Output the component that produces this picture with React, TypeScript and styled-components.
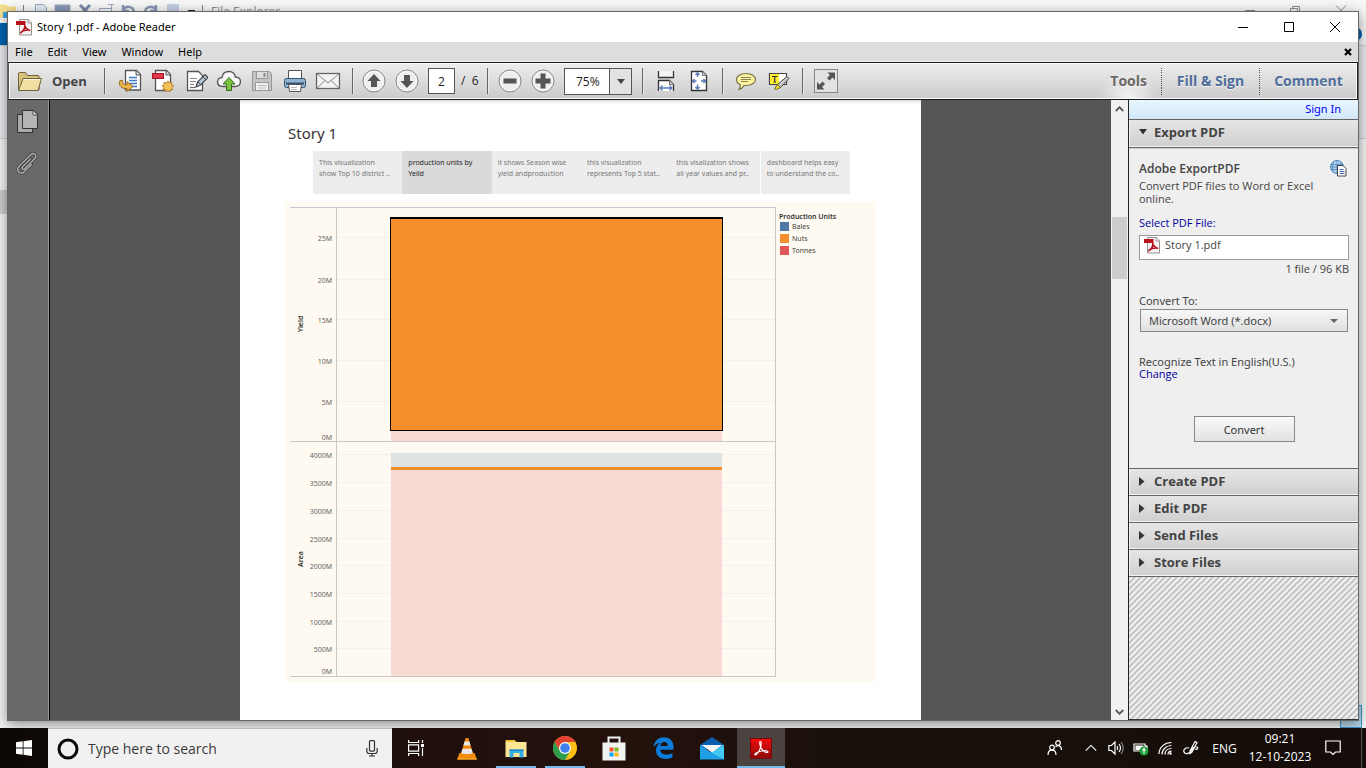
import React from 'react';
import styled, { createGlobalStyle } from 'styled-components';

const ui = '"Open Sans", "Noto Sans", sans-serif';
const wide = '"Noto Sans", "Open Sans", sans-serif';

const GlobalStyle = createGlobalStyle`
  *, *::before, *::after { box-sizing: border-box; }
  html, body, #root { height: 100%; }
  body { margin: 0; overflow: hidden; font-family: ${ui}; font-size: 12px; color: #111; }
  button, input, select { font: inherit; color: inherit; margin: 0; }
  button { border: 0; padding: 0; background: none; cursor: pointer; }
  h1, h2, p { margin: 0; }
  a { text-decoration: none; }
  svg { display: block; flex: none; }
`;

/* ---------- desktop ---------- */

const Desktop = styled.div`
  position: relative;
  height: 100vh;
  display: flex;
  flex-direction: column;
  overflow: hidden;
`;

const Workspace = styled.div`
  flex: 1;
  min-height: 0;
  display: flex;
  padding: 11px 7px 7px;
`;

/* ---------- file explorer behind the reader ---------- */

const Explorer = styled.div`
  position: absolute;
  inset: 0 0 40px;
  display: flex;
  flex-direction: column;
  background: #f4f4f4;
  color: #8a8a8a;
`;

const ExplorerTitle = styled.div`
  height: 23px;
  flex: none;
  display: flex;
  align-items: center;
  background: #f7f7f7;
`;

const ExplorerCaption = styled.span`
  font-size: 12px;
  line-height: 16px;
  margin-left: 8px;
`;

const ExplorerControls = styled.div`
  margin-left: auto;
  margin-right: 19px;
`;

const ExplorerRibbon = styled.div`
  height: 23px;
  flex: none;
  display: flex;
  justify-content: space-between;
  border-bottom: 1px solid #d0d0d0;
`;

const ExplorerFile = styled.div`
  width: 56px;
  background: #0063b1;
`;

const ExplorerHelp = styled.div`
  width: 16px;
  height: 14px;
  margin: 4px 4px 0 0;
  border-radius: 8px;
  background: #0063b1;
`;

const ExplorerBar = styled.div`
  height: 93px;
  flex: none;
  background: #e8eaed;
  border-bottom: 1px solid #cfcfcf;
`;

const ExplorerBody = styled.div`
  flex: 1;
  padding-top: 51px;
`;

const ExplorerRow = styled.div`
  height: 24px;
  width: 160px;
  background: #cfcfcf;
`;

const ExplorerStatus = styled.div`
  height: 23px;
  flex: none;
  display: flex;
  justify-content: space-between;
  padding: 0 4px 0 14px;
  font-size: 12px;
  line-height: 20px;
  color: #26486e;
`;

const ExplorerView = styled.div`
  width: 22px;
  border: 1px solid #3b97cf;
  background: #b8dbee;
`;

/* ---------- reader window ---------- */

const Window = styled.main`
  position: relative;
  flex: 1;
  min-width: 0;
  display: flex;
  flex-direction: column;
  border: 1px solid #666;
  background: #fff;
  box-shadow: 0 3px 12px rgba(0, 0, 0, 0.45);
`;

const TitleBar = styled.header`
  height: 30px;
  flex: none;
  display: flex;
  align-items: center;
  padding-left: 8px;
  gap: 5px;
  background: #fff;
`;

const Title = styled.h1`
  font-family: ${wide};
  font-size: 11px;
  line-height: 16px;
  font-weight: 400;
  color: #000;
`;

const WindowControls = styled.div`
  margin-left: auto;
  display: flex;
`;

const ControlButton = styled.button`
  width: 46px;
  height: 29px;
  display: grid;
  place-items: center;
`;

const MenuBar = styled.nav`
  height: 20px;
  flex: none;
  display: flex;
  align-items: center;
  padding: 0 5px 0 7px;
  gap: 15px;
  background: #ddd;
  border-bottom: 1px solid #eee;
`;

const MenuItem = styled.button`
  font-family: ${wide};
  font-size: 11px;
  line-height: 16px;
  color: #000;
`;

const CloseDoc = styled.button`
  margin-left: auto;
`;

const Toolbar = styled.div`
  height: 38px;
  flex: none;
  display: flex;
  align-items: center;
  border: 1px solid #1c1c1c;
  border-left-color: #555;
  box-shadow: inset 0 0 0 1px #fafafa;
  background: linear-gradient(#ededed, #cbcbcb);
`;

const OpenButton = styled.button`
  width: 87px;
  display: flex;
  align-items: center;
  gap: 9px;
  padding-left: 8px;
  font-size: 13px;
  line-height: 18px;
  font-weight: 700;
  color: #444;
`;

const ToolButton = styled.button`
  width: 33px;
  height: 30px;
  display: grid;
  place-items: center;
`;

const Separator = styled.span<{ $before: number; $after: number }>`
  width: 1px;
  height: 26px;
  flex: none;
  margin: 0 ${p => p.$after}px 0 ${p => p.$before}px;
  background: #666;
  box-shadow: 1px 0 #e8e8e8;
`;

const PageInput = styled.input`
  width: 27px;
  height: 26px;
  margin-left: 5px;
  padding: 0;
  text-align: center;
  border: 1px solid #555;
  background: #fff;
  font-size: 12px;
  color: #222;
`;

const PageTotal = styled.span`
  width: 24px;
  padding-left: 6px;
  white-space: nowrap;
  font-size: 12px;
  line-height: 16px;
  color: #222;
`;

const ZoomBox = styled.div`
  width: 68px;
  height: 27px;
  margin-left: 5px;
  display: grid;
  grid-template-columns: 1fr 22px;
  border: 1px solid #555;
  background: #fff;
`;

const ZoomSelect = styled.select`
  grid-area: 1 / 1 / 2 / 3;
  appearance: none;
  border: 0;
  padding: 0 0 0 11px;
  background: transparent;
  font-size: 12px;
  color: #222;
`;

const ZoomArrow = styled.span`
  grid-area: 1 / 2 / 2 / 3;
  display: grid;
  place-items: center;
  border-left: 1px solid #555;
  background: #e2e2e2;
  pointer-events: none;
`;

const PaneTabs = styled.div`
  margin-left: auto;
  display: flex;
  align-items: center;
`;

const PaneTab = styled.button<{ $active?: boolean }>`
  height: 34px;
  padding: 0 14px;
  font-size: 14px;
  line-height: 20px;
  font-weight: 700;
  color: ${p => (p.$active ? '#6a6764' : '#4f6d9a')};
  background: ${p => (p.$active ? 'radial-gradient(ellipse at 50% 100%, #f2f2f2, transparent 65%)' : 'none')};
  text-shadow: 0 1px #f4f4f4;

  & + & {
    height: 28px;
    min-width: 98px;
    border-image: repeating-linear-gradient(#555 0 1px, transparent 1px 2px) 1;
    border-style: solid;
    border-width: 0 0 0 1px;
  }
`;

const Body = styled.div`
  flex: 1;
  min-height: 0;
  display: flex;
`;

const Rail = styled.aside`
  width: 42px;
  flex: none;
  display: flex;
  flex-direction: column;
  align-items: center;
  gap: 16px;
  padding: 8px 3px 0 0;
  background: #696969;
  border-right: 1px solid #000;
  box-shadow: inset -1px 0 #999;
`;

const RailButton = styled.button`
  height: 26px;
`;

const DocumentPane = styled.section`
  flex: 1;
  min-width: 0;
  display: flex;
  justify-content: center;
  overflow: hidden;
  background: #565656;
`;

const Page = styled.article`
  width: 681px;
  flex: none;
  padding: 23px 45px 0;
  background: linear-gradient(#ddd, #fff 4px);
  font-family: ${wide};
`;

const StoryTitle = styled.h2`
  padding-left: 3px;
  font-size: 15px;
  line-height: 20px;
  font-weight: 400;
  color: #333;
`;

const Points = styled.nav`
  display: flex;
  margin: 8px 26px 8px 28px;
`;

const Point = styled.button<{ $active?: boolean }>`
  flex: 1;
  min-width: 0;
  height: 43px;
  padding: 6px 0 0 6px;
  display: flex;
  flex-direction: column;
  font-size: 7px;
  line-height: 11px;
  white-space: nowrap;
  text-align: left;
  color: ${p => (p.$active ? '#222' : '#777')};
  background: ${p => (p.$active ? '#dadada' : '#ededed')};

  &:last-child { border-left: 1px solid #fff; }
`;

const ScrollBar = styled.div`
  width: 17px;
  flex: none;
  display: flex;
  flex-direction: column;
  align-items: center;
  justify-content: space-between;
  padding: 6px 1px 5px 0;
  background: #f0f0f0;
`;

const ScrollTrack = styled.div`
  flex: 1;
  align-self: stretch;
  padding: 105px 0 0 1px;
`;

const ScrollThumb = styled.div`
  height: 62px;
  background: #cdcdcd;
`;

/* ---------- tools panel ---------- */

/* the tile's corners carry the ends of the neighbouring stripes */
const Panel = styled.aside`
  width: 230px;
  flex: none;
  display: flex;
  flex-direction: column;
  border-left: 1px solid #222;
  border-bottom: 1px solid #333;
  background: linear-gradient(135deg, #efefef 9%, #c8c8c8 9% 41%, #efefef 41% 59%, #c8c8c8 59% 91%, #efefef 91%) 0 0 / 6px 6px;
`;

const SignIn = styled.div`
  height: 20px;
  flex: none;
  padding-right: 17px;
  text-align: right;
  border-bottom: 1px solid #666;
  background: linear-gradient(#e8f5fd, #d2e8f8);
  font-family: ${wide};
  font-size: 11px;
  line-height: 18px;
`;

const BlueLink = styled.a`
  color: #00f;
`;

const NavyLink = styled.a`
  color: #00009c;
  font-size: 11px;
  line-height: 12px;
`;

const SectionHead = styled.button`
  height: 27px;
  flex: none;
  display: flex;
  align-items: center;
  gap: 7px;
  padding: 0 0 2px 9px;
  border-bottom: 1px solid #666;
  box-shadow: inset 1px 0 #f4f4f4, inset 0 -1px #f4f4f4;
  background: linear-gradient(#e6e6e6, #cfcfcf);
  font-size: 13px;
  line-height: 18px;
  font-weight: 700;
  color: #444;
`;

const ExportHead = styled(SectionHead)`
  height: 28px;
  padding-bottom: 4px;
`;

const ExportBody = styled.div`
  flex: none;
  display: flex;
  flex-direction: column;
  align-items: flex-start;
  padding: 10px 9px 26px 10px;
  border-bottom: 1px solid #666;
  background: #efefef;
  box-shadow: inset 0 1px #ccc;
  font-size: 11px;
  line-height: 13px;
  color: #444;
`;

const ExportTitle = styled.div`
  align-self: stretch;
  display: flex;
  justify-content: space-between;
  align-items: center;
  height: 20px;
  margin-bottom: 1px;
  padding-right: 2px;
  font-size: 12px;
  font-weight: 600;
`;

const SelectFile = styled(NavyLink)`
  margin-top: 12px;
`;

const FileBox = styled.div`
  align-self: stretch;
  display: flex;
  align-items: flex-start;
  gap: 5px;
  height: 25px;
  margin: 6px 0 2px;
  padding: 1px 4px;
  border: 1px solid #999;
  background: #fff;
`;

const FileName = styled.span`
  line-height: 16px;
`;

const FileInfo = styled.p`
  align-self: flex-end;
`;

const FormatLabel = styled.label`
  margin: 19px 0 2px;
  font-family: ${wide};
`;

const FormatBox = styled.div`
  align-self: stretch;
  height: 23px;
  margin: 0 1px;
  display: grid;
  grid-template-columns: 1fr 26px;
  border: 1px solid #888;
  background: linear-gradient(#f7f7f7, #e0e0e0);
  font-family: ${wide};
`;

const FormatSelect = styled.select`
  grid-area: 1 / 1 / 2 / 3;
  appearance: none;
  border: 0;
  padding: 0 0 0 8px;
  background: transparent;
`;

const FormatArrow = styled.span`
  grid-area: 1 / 2 / 2 / 3;
  display: grid;
  place-items: center;
  pointer-events: none;
`;

const Recognize = styled.p`
  margin-top: 24px;
  font-family: ${wide};
  line-height: 12px;
`;

const ConvertButton = styled.button`
  align-self: center;
  width: 101px;
  height: 26px;
  margin-top: 36px;
  border: 1px solid #888;
  background: linear-gradient(#fafafa, #e2e2e2);
  font-family: ${wide};
  font-size: 11px;
  color: #333;
`;

/* ---------- taskbar ---------- */

const TaskBar = styled.footer`
  position: relative;
  height: 40px;
  flex: none;
  display: flex;
  background: linear-gradient(90deg, #0d0807, #1b0f0b 20%, #24110c 45%, #17100a 65%, #150d09);
  color: #fff;
`;

const StartButton = styled.button`
  width: 48px;
  display: grid;
  place-items: center;
`;

const SearchBox = styled.label`
  width: 344px;
  display: flex;
  align-items: center;
  padding: 0 14px 0 9px;
  gap: 9px;
  border-top: 1px solid #bbb;
  background: #f1f1f1;
`;

const SearchInput = styled.input`
  flex: 1;
  min-width: 0;
  border: 0;
  padding: 0;
  outline: 0;
  background: transparent;
  font-size: 14px;
  line-height: 20px;

  &::placeholder { color: #3a3a3a; opacity: 1; }
`;

const Apps = styled.div`
  display: flex;
  gap: 1px;
  margin-left: 3px;
`;

const TaskButton = styled.button<{ $state?: 'open' | 'active' }>`
  width: 48px;
  display: grid;
  place-items: center;
  background: ${p => (p.$state === 'active' ? '#4a433f' : 'transparent')};
  background-image: ${p => (p.$state ? 'linear-gradient(#76b9ed, #76b9ed)' : 'none')};
  background-repeat: no-repeat;
  background-position: center bottom;
  background-size: ${p => (p.$state === 'active' ? '100%' : '40px')} 2px;
`;

const Tray = styled.div`
  margin-left: auto;
  display: flex;
  padding-right: 4px;
`;

const TrayButton = styled.button`
  width: 25px;
  display: grid;
  place-items: center;
`;

const PeopleButton = styled(TrayButton)`
  margin-right: 11px;
`;

const Language = styled(TrayButton)`
  width: 43px;
  font-size: 12px;
  color: #fff;
`;

const Clock = styled.time`
  width: 68px;
  text-align: center;
  font-size: 12px;
  line-height: 18px;
  padding-top: 2px;
  white-space: nowrap;
`;

const NoticeButton = styled(TrayButton)`
  width: 38px;
  margin-right: 9px;
`;

const DesktopEdge = styled.span`
  border-left: 1px solid #555;
`;

/* ---------- icons ---------- */

const PdfIcon = () => (
  <svg width="16" height="17" viewBox="0 0 16 17">
    <path d="M3.500 .5h9l3 3v12.500h-12z" fill="#f6f3f3" stroke="#9a8f8f" />
    <path d="M12 .5v3.500h3.500" fill="#fff" stroke="#9a8f8f" />
    <rect x="0" y="2" width="9.500" height="4" fill="#b5121b" />
    <path d="M8.700 6c.5 3-.8 6-4.500 8M4.500 13.500c3-2.300 6-2.800 9.800-2.300M8.500 6c.7 2.500 2.500 4.500 5.500 5.600" fill="none" stroke="#b5121b" strokeWidth="1.500" />
  </svg>
);

const FolderIcon = () => (
  <svg width="26" height="22" viewBox="0 0 26 22">
    <path d="M1.500 20V3.500q0-1 1-1h6l2 3h10.500q1 0 1 1V20z" fill="#d9c27c" stroke="#6d6140" />
    <path d="M6 8.500h18.500L21 20.500H1.500z" fill="#f0dfa2" stroke="#6d6140" />
    <path d="M7 9.500h16" stroke="#fff8d8" />
  </svg>
);

const ConvertIcon = () => (
  <svg width="24" height="24" viewBox="0 0 24 24">
    <path d="M7.500 1.500h11l4 4v15.500h-15z" fill="#fff" stroke="#555" strokeWidth="1.300" />
    <path d="M18 2v4h4" fill="#ddd" stroke="#555" />
    <path d="M11 8.500h8M11 11.500h8M11 14.500h8M14 17.500h5" stroke="#3a78c6" strokeWidth="1.500" />
    <path d="M2 11.500c-2 5 1.500 8.500 7 8v3l6-5-6-5v3.200c-3.500.4-5-1.200-4.500-4.200z" fill="#e9b64e" stroke="#9b6a1a" />
  </svg>
);

const CreateIcon = () => (
  <svg width="24" height="24" viewBox="0 0 24 24">
    <path d="M4.500 1.500h11l4 4v16h-15z" fill="#fff" stroke="#555" strokeWidth="1.300" />
    <path d="M15 2v4h4" fill="#ddd" stroke="#555" />
    <rect x="1.500" y="4.500" width="11" height="5" fill="#e4384a" stroke="#a01525" />
    <path d="M17 12l1.400 2 2.300-.6-.2 2.400 2.200 1-1.800 1.700.9 2.100-2.400.1-.7 2.200-1.900-1.400-1.900 1.400-.7-2.200-2.200-.1.800-2.100-1.800-1.700 2.200-1-.2-2.400 2.300.6z" fill="#f3c15a" stroke="#b8842e" />
  </svg>
);

const SignIcon = () => (
  <svg width="24" height="24" viewBox="0 0 24 24">
    <path d="M3.500 2.500h11l4 4v15h-15z" fill="#fff" stroke="#555" strokeWidth="1.300" />
    <path d="M6 9.500h7M6 12.500h6M6 15.500h4" stroke="#888" />
    <path d="M6 19c2-2 3 1 5-1" fill="none" stroke="#333" />
    <path d="M12 18l1.500-5L21 5.500l3 3-7.500 7.500z" fill="#b9c9dc" stroke="#444" strokeWidth="1.200" />
    <path d="M14 13l3 3M19 8l3 3" stroke="#444" />
  </svg>
);

const CloudIcon = () => (
  <svg width="26" height="24" viewBox="0 0 26 24">
    <path d="M7 17.500c-3.500 0-5.500-2-5.500-4.500s2-4.500 4.500-4.500c.5-4 3.500-6 7-6s6 2.500 6.300 5.500c3 0 5.200 2 5.200 4.800s-2.500 4.700-5.500 4.700z" fill="#f7f7f7" stroke="#555" strokeWidth="1.400" />
    <path d="M13 8.500l6 6.500h-3.500v6.500h-5V15H7z" fill="#7cc243" stroke="#35701a" />
  </svg>
);

const SaveIcon = () => (
  <svg width="22" height="22" viewBox="0 0 22 22">
    <path d="M1.500 1.500h17l2 2v17h-19z" fill="#c4c4c4" stroke="#969696" />
    <rect x="5.500" y="1.500" width="11" height="7" fill="#dedede" stroke="#999" />
    <path d="M13.500 3v4" stroke="#888" strokeWidth="2" />
    <rect x="4.500" y="12.500" width="13" height="8" fill="#efefef" stroke="#999" />
    <path d="M7 15.500h8M7 18h8" stroke="#bbb" />
  </svg>
);

const PrintIcon = () => (
  <svg width="24" height="24" viewBox="0 0 24 24">
    <path d="M5.500 1.500h13v9h-13z" fill="#fff" stroke="#555" />
    <rect x="1.500" y="9.500" width="21" height="9" rx="2" fill="#8fb4d2" stroke="#35506a" />
    <path d="M3 14.500h18" stroke="#35506a" strokeWidth="2" />
    <path d="M5.500 15.500h13l-1 7h-11z" fill="#fff" stroke="#555" />
    <path d="M8 18.500h6M8 20.500h6" stroke="#bbb" />
  </svg>
);

const MailIcon = () => (
  <svg width="26" height="18" viewBox="0 0 26 18">
    <rect x="1.500" y="1.500" width="23" height="15" fill="#f3f3f3" stroke="#666" strokeWidth="1.300" />
    <path d="M2 2l11 9 11-9M2 16l8-7.500M24 16l-8-7.500" fill="none" stroke="#888" />
  </svg>
);

const RoundIcon = ({ d }: { d: string }) => (
  <svg width="24" height="24" viewBox="0 0 24 24">
    <circle cx="12" cy="12" r="11" fill="#eee" stroke="#888" />
    <circle cx="12" cy="12" r="9.500" fill="none" stroke="#fafafa" />
    <path d={d} fill="#555" />
  </svg>
);

const FitWidthIcon = () => (
  <svg width="18" height="22" viewBox="0 0 18 22">
    <path d="M1.500 1v6.500h15V1" fill="#f4f4f4" stroke="#333" strokeWidth="1.300" />
    <path d="M1.500 21V10.500h11l4 4V21" fill="#fff" stroke="#333" strokeWidth="1.300" />
    <path d="M12.500 10.500v4h4" fill="#ccc" stroke="#777" />
    <path d="M3 18h12M5.500 15.500L3 18l2.500 2.500M12.500 15.500L15 18l-2.500 2.500" fill="none" stroke="#5a78b5" strokeWidth="1.300" />
  </svg>
);

const FitPageIcon = () => (
  <svg width="18" height="22" viewBox="0 0 18 22">
    <path d="M1.500 1.500h11l4 4v15h-15z" fill="#fff" stroke="#333" strokeWidth="1.300" />
    <path d="M12.500 1.500v4h4" fill="#ccc" stroke="#777" />
    <path d="M7.500 3v4M7.500 14.500V19M2.500 11h4M11 11h4.500M5.500 5l2-2 2 2M5.500 17l2 2 2-2M4.500 9l-2 2 2 2M13.500 9l2 2-2 2" fill="none" stroke="#5a78b5" strokeWidth="1.400" />
  </svg>
);

const CommentIcon = () => (
  <svg width="22" height="20" viewBox="0 0 22 20">
    <path d="M11 2.500c5.500 0 9.500 2.500 9.500 6s-4 6-9.500 6c-1 0-1.500 0-2 0-1 2-2.500 3.500-5 4 1.200-1.500 1.500-3 1.300-4.800C3 12.700 1.500 10.800 1.500 8.500c0-3.500 4-6 9.500-6z" fill="#fbf3a0" stroke="#77724a" strokeWidth="1.200" />
    <path d="M6 6.500h10M6 8.500h10M6 10.500h7" stroke="#8b8555" />
  </svg>
);

const HighlightIcon = () => (
  <svg width="22" height="20" viewBox="0 0 22 20">
    <path d="M1.500 2.500h17v11h-17z" fill="#fff" stroke="#444" strokeWidth="1.200" />
    <rect x="2" y="3" width="9" height="10" fill="#ffed2f" />
    <path d="M4 5.500h5.500M6.700 5.500v5.500M5.500 11h2.500" stroke="#333" strokeWidth="1.200" />
    <path d="M9 14l10-8.500 2 2L12 17z" fill="#ccc" stroke="#444" />
    <path d="M9.500 13.500l3 3-4 2-2-.5z" fill="#e8d83a" stroke="#77701c" />
  </svg>
);

const ExpandIcon = () => (
  <svg width="24" height="24" viewBox="0 0 24 24">
    <rect x=".5" y=".5" width="23" height="23" fill="#e2e2e2" stroke="#888" />
    <path d="M13.500 3.500h7.500v7.500l-2.500-2.500-3 3-2.500-2.500 3-3zM10.500 20.500H3v-7.500l2.500 2.500 3-3 2.500 2.500-3 3z" fill="#555" />
  </svg>
);

const PagesIcon = () => (
  <svg width="23" height="25" viewBox="0 0 23 25">
    <rect x="1.500" y="5.500" width="15" height="18" fill="#aaa" stroke="#333" />
    <path d="M6.500 1.500h11l4 4v14h-15z" fill="#b5b5b5" stroke="#333" />
    <path d="M17 2v4h4" fill="#ddd" stroke="#555" />
  </svg>
);

const ClipIcon = () => (
  <svg width="22" height="24" viewBox="0 0 22 24" fill="none" strokeLinecap="round">
    {['#3f3f3f', '#b0b0b0'].map((c, i) => (
      <path key={c} d="M14.500 8l-8 8c-1.300 1.300.8 3.300 2 2L18.800 7.500c3-3.200-1-6.800-4-3.800L3.200 15.200c-4 4.200 1.200 9.300 5.300 5.200l7-7" stroke={c} strokeWidth={i ? 1.4 : 3} />
    ))}
  </svg>
);

const GlobeIcon = () => (
  <svg width="17" height="17" viewBox="0 0 17 17">
    <circle cx="7" cy="7" r="6.500" fill="#b4d3ef" stroke="#4b86bd" />
    <path d="M1 4.500h12M1 9.500h12M7 .5v13M4 1.500c-2 3-2 8 0 11M10 1.500c2 3 2 8 0 11M.5 7h13" fill="none" stroke="#4b86bd" strokeWidth=".8" />
    <path d="M7.500 5.500h5.500l3 3v7.500H7.500z" fill="#fff" stroke="#444" />
    <path d="M9.500 9.500h4M9.500 11.500h5M9.500 13.500h5" stroke="#3a62a0" />
  </svg>
);

const Chevron = ({ up }: { up?: boolean }) => (
  <svg width="9" height="6" viewBox="0 0 9 6">
    <path d={up ? 'M.8 5l3.700-3.800L8.200 5' : 'M.8 1l3.700 3.800L8.200 1'} fill="none" stroke="#555" strokeWidth="1.800" />
  </svg>
);

const Triangle = ({ open }: { open?: boolean }) => (
  <svg width="9" height="9" viewBox="0 0 9 9">
    <path d={open ? 'M1 2h8L5 7.500z' : 'M1 0l5.500 4.500L1 9z'} fill="#333" />
  </svg>
);

const QuickAccessIcons = () => (
  <svg width="203" height="23" viewBox="0 0 203 23" fill="none" stroke="#9aa9c0">
    <path d="M0 4.500h6l2 2h8V18H0z" fill="#f4dd8b" stroke="none" />
    <path d="M3 12h10v6H3z" fill="#3ba3dc" stroke="none" />
    <path d="M23.500 5v12M202.500 5v12" stroke="#888" />
    <path d="M35.500 4.500h8l3 3V18h-11z" fill="#e3eaf5" />
    <path d="M55 5h15v13H55z" fill="#8797b5" />
    <path d="M80 5l10 10M90 5L80 15" stroke="#7789a8" strokeWidth="3" />
    <path d="M99.500 8.500h12v7h-12zM108 4.500h6M111.500 4.500v13" />
    <path d="M123 5v6h6M123 10c3-5 11-4 11 3M156 5v6h-6M156 10c-3-5-11-4-11 3" stroke="#8797b5" strokeWidth="2.500" />
    <rect x="167" y="4" width="12" height="13" fill="#c3cfe4" stroke="none" />
    <path d="M188 10.500h7" stroke="#222" />
  </svg>
);

const ExplorerWindowIcons = () => (
  <svg width="104" height="14" viewBox="0 0 104 14" fill="none" stroke="#8a8a8a">
    <path d="M2 5.500h10M47.500 3.500h7v7h-7zM49.500 3.500v-2h7v7h-2M93 .5l10 10M103 .5l-10 10" />
  </svg>
);

const WindowsIcon = () => (
  <svg width="16" height="16" viewBox="0 0 16 16" fill="#fff">
    <path d="M0 2.200L6.700 1.300v6.300H0zM7.500 1.200L16 0v7.600H7.500zM0 8.400h6.700v6.300L0 13.800zM7.500 8.400H16V16l-8.500-1.200z" />
  </svg>
);

const CortanaIcon = () => (
  <svg width="22" height="22" viewBox="0 0 22 22">
    <circle cx="11" cy="11" r="9" fill="none" stroke="#0a0a0a" strokeWidth="3" />
  </svg>
);

const MicIcon = () => (
  <svg width="12" height="17" viewBox="0 0 12 17" fill="none" stroke="#333" strokeWidth="1.200">
    <rect x="3.500" y=".6" width="5" height="10.500" rx="1" />
    <path d="M.8 8v3q0 2.500 2.500 2.500h5.400q2.500 0 2.500-2.500V8M6 13.500V16M3 16h6" />
  </svg>
);

const TaskViewIcon = () => (
  <svg width="17" height="16" viewBox="0 0 17 16" fill="none" stroke="#fff" strokeWidth="1.200">
    <path d="M.6 0v2.500h10V0M.6 16v-2.500h10V16M.6 4.800h10v6.400H.6zM14.500 0v3M14.500 8v8" />
    <path d="M13 4h3v3h-3z" fill="#fff" stroke="none" />
  </svg>
);

const VlcIcon = () => (
  <svg width="20" height="23" viewBox="0 0 20 23">
    <path d="M2.500 16h15l2.500 6.500H0z" fill="#f28a0c" />
    <path d="M8.600 1h2.800l5 17c-3 2-9.800 2-12.800 0z" fill="#f28a0c" />
    <path d="M7.600 4.500h4.800l1.200 4H6.400zM5.500 11.700h9l1.200 4.200c-3 1.600-8.500 1.600-11.400 0z" fill="#e8e8ec" />
    <path d="M.4 21.500h19.200v1H.4z" fill="#ffb53a" />
  </svg>
);

const FilesIcon = () => (
  <svg width="22" height="19" viewBox="0 0 22 19">
    <path d="M.5 2q0-1 1-1h8l2 2h10v15H.5z" fill="#ffe694" />
    <path d="M1 1h8.500l1.500 2H1z" fill="#f5c23c" />
    <path d="M4.500 18.500v-8h14v8h-4v-4.500h-6v4.500z" fill="#35b0e6" />
    <path d="M4.500 10.500h14v1.500h-14z" fill="#2087c7" />
  </svg>
);

const ChromeIcon = () => (
  <svg width="24" height="24" viewBox="0 0 24 24">
    <circle cx="12" cy="12" r="12" fill="#fbbf16" />
    <path d="M1.600 6A12 12 0 0 1 22.400 6H12L7 14.500z" fill="#df4233" />
    <path d="M1.600 6A12 12 0 0 0 12 24l5.500-9.500L7 15z" fill="#2f9e4f" />
    <circle cx="12" cy="12" r="6" fill="#fff" />
    <circle cx="12" cy="12" r="4.800" fill="#3f7fee" />
  </svg>
);

const StoreIcon = () => (
  <svg width="24" height="25" viewBox="0 0 24 25">
    <path d="M6.500 8V1.500h11V8" fill="none" stroke="#f2f2f2" strokeWidth="2" />
    <path d="M.5 6.500h23v18H.5z" fill="#f2f2f2" />
    <path d="M7.500 11.500h4v4h-4z" fill="#f1502d" />
    <path d="M12.500 11.500h4v4h-4z" fill="#7cbb1a" />
    <path d="M7.500 16.500h4v4h-4z" fill="#10a3ee" />
    <path d="M12.500 16.500h4v4h-4z" fill="#fcb813" />
  </svg>
);

const EdgeIcon = () => (
  <svg width="21" height="22" viewBox="0 0 21 22">
    <path d="M.5 10C1.300 4.200 5.200.3 11 .3c6 0 9.500 4.200 9.500 9.700v2.700H7.300c.2 3.200 2.700 4.900 6 4.900 2.200 0 4.300-.6 6.200-1.700v4.400c-2 1.100-4.600 1.600-7 1.600C6.600 21.900 3 18.500 3 13.300c0-3.200 1.700-6 4.500-7.600C4.600 6.100 2 7.600.5 10zm7-1h7.300c0-2.500-1.200-4-3.500-4-2.200 0-3.600 1.600-3.800 4z" fill="#0b7bdc" />
  </svg>
);

const MailAppIcon = () => (
  <svg width="24" height="23" viewBox="0 0 24 23">
    <path d="M0 8L12 0l12 8v4H0z" fill="#0c5fae" />
    <path d="M0 8l12 8 12-8v14.500H0z" fill="#1f9fe6" />
    <path d="M24 8v14.500L11 15.500z" fill="#43c8f5" />
    <path d="M1.500 8h21L12 15.500z" fill="#f4f6f8" />
  </svg>
);

const AcrobatIcon = () => (
  <svg width="22" height="21" viewBox="0 0 22 21">
    <defs>
      <linearGradient id="acrobat" x2="0" y2="1">
        <stop stopColor="#f20d0d" />
        <stop offset="1" stopColor="#8c0808" />
      </linearGradient>
    </defs>
    <rect x=".5" y=".5" width="21" height="20" fill="url(#acrobat)" stroke="#7a0a0a" />
    <path d="M9.800 3.800c1.800-1.200 1.700 2 .9 5-.9 3.200-3.200 7-5.200 8.200-1.700-.3 0-2.500 4-3.500s8-1 8.500.3c.2 1.300-3 .8-5-1.300s-3.500-6.200-3.200-8.700z" fill="none" stroke="#fff" strokeWidth="1.100" />
  </svg>
);

/* tray glyphs share one 16px outline style */
const TrayGlyph = ({ children, size = 16 }: { children: React.ReactNode; size?: number }) => (
  <svg width={size} height={size} viewBox="0 0 16 16" fill="none" stroke="#fff" strokeWidth="1.200">
    {children}
  </svg>
);

/* ---------- story chart ---------- */

const yieldTicks = [
  { label: '25M', y: 35 }, { label: '20M', y: 77 }, { label: '15M', y: 117 },
  { label: '10M', y: 158 }, { label: '5M', y: 199 },
];
const areaTicks = [
  { label: '4000M', y: 252 }, { label: '3500M', y: 280 }, { label: '3000M', y: 308 },
  { label: '2500M', y: 336 }, { label: '2000M', y: 363 }, { label: '1500M', y: 391 },
  { label: '1000M', y: 419 }, { label: '500M', y: 446 },
];
const legend = [
  { label: 'Bales', color: '#4e79a7', y: 20 },
  { label: 'Nuts', color: '#f28e2b', y: 32 },
  { label: 'Tonnes', color: '#e15759', y: 44 },
];

const ChartSvg = styled.svg`
  width: 100%;
  height: auto;
  font-family: ${wide};
  font-size: 7px;
`;

const StoryChart = () => (
  <ChartSvg viewBox="0 0 591 480" role="img" aria-label="Yield and area by production unit">
    <rect width="591" height="480" fill="#fffaf1" />
    <g shapeRendering="crispEdges">
      {[...yieldTicks, ...areaTicks].map(t => (
        <rect key={t.label} x="52" y={t.y} width="438" height="1" fill="#f1f1f1" />
      ))}
      <path d="M5 5.500h486M5 239.500h486M5 474.500h486M51.500 5v470M490.500 5v470" stroke="#c8c8c8" fill="none" />
      <rect x="106" y="229" width="331" height="10" fill="#f7dad4" />
      <rect x="105" y="15" width="333" height="214" fill="#000" />
      <rect x="106" y="17" width="331" height="211" fill="#f58f2c" />
      <rect x="106" y="251" width="331" height="14" fill="#dde2e2" />
      <rect x="106" y="265" width="331" height="3" fill="#f28e2b" />
      <rect x="106" y="268" width="331" height="206" fill="#f7dad4" />
    </g>
    <g fill="#666" textAnchor="end">
      {[...yieldTicks, ...areaTicks].map(t => (
        <text key={t.label} x="47" y={t.y + 4}>{t.label}</text>
      ))}
      <text x="47" y="238">0M</text>
      <text x="47" y="472">0M</text>
    </g>
    <g fill="#333" textAnchor="middle" fontWeight="600">
      <text transform="translate(18 122) rotate(-90)">Yield</text>
      <text transform="translate(18 357) rotate(-90)">Area</text>
    </g>
    <text x="494" y="17" fill="#333" fontWeight="600">Production Units</text>
    {legend.map(item => (
      <g key={item.label}>
        <rect x="495" y={item.y} width="9" height="9" fill={item.color} />
        <text x="507" y={item.y + 7} fill="#444">{item.label}</text>
      </g>
    ))}
  </ChartSvg>
);

const storyPoints = [
  ['This visualization', 'show Top 10 district ..'],
  ['production units by', 'Yeild'],
  ['it shows Season wise', 'yield andproduction'],
  ['this visualization', 'represents Top 5 stat..'],
  ['this visalization shows', 'all year values and pr..'],
  ['dashboard helps easy', 'to understand the co..'],
];

export default function App() {
  return (
    <>
      <GlobalStyle />
      <Desktop>
        <Explorer>
          <ExplorerTitle>
            <QuickAccessIcons />
            <ExplorerCaption>File Explorer</ExplorerCaption>
            <ExplorerControls><ExplorerWindowIcons /></ExplorerControls>
          </ExplorerTitle>
          <ExplorerRibbon><ExplorerFile /><ExplorerHelp /></ExplorerRibbon>
          <ExplorerBar />
          <ExplorerBody><ExplorerRow /></ExplorerBody>
          <ExplorerStatus><span>58 items</span><ExplorerView /></ExplorerStatus>
        </Explorer>

        <Workspace>
          <Window>
            <TitleBar>
              <PdfIcon />
              <Title>Story 1.pdf - Adobe Reader</Title>
              <WindowControls>
                <ControlButton aria-label="Minimize">
                  <svg width="10" height="10" stroke="#000"><path d="M0 5.500h10" /></svg>
                </ControlButton>
                <ControlButton aria-label="Maximize">
                  <svg width="10" height="10" stroke="#000" fill="none"><path d="M.5 .5h9v9h-9z" /></svg>
                </ControlButton>
                <ControlButton aria-label="Close">
                  <svg width="10" height="10" stroke="#000"><path d="M0 0l10 10M10 0L0 10" /></svg>
                </ControlButton>
              </WindowControls>
            </TitleBar>

            <MenuBar>
              {['File', 'Edit', 'View', 'Window', 'Help'].map(m => <MenuItem key={m}>{m}</MenuItem>)}
              <CloseDoc aria-label="Close document">
                <svg width="10" height="8" viewBox="0 0 10 8" stroke="#000" strokeWidth="2.200"><path d="M2 1l6 6M8 1L2 7" /></svg>
              </CloseDoc>
            </MenuBar>

            <Toolbar>
              <OpenButton><FolderIcon />Open</OpenButton>
              <Separator $before={8} $after={8} />
              <ToolButton aria-label="Convert file"><ConvertIcon /></ToolButton>
              <ToolButton aria-label="Create PDF"><CreateIcon /></ToolButton>
              <ToolButton aria-label="Sign"><SignIcon /></ToolButton>
              <ToolButton aria-label="Upload"><CloudIcon /></ToolButton>
              <ToolButton aria-label="Save"><SaveIcon /></ToolButton>
              <ToolButton aria-label="Print"><PrintIcon /></ToolButton>
              <ToolButton aria-label="Email"><MailIcon /></ToolButton>
              <Separator $before={8} $after={4} />
              <ToolButton aria-label="Previous page"><RoundIcon d="M12 5l6.500 7H15v6H9v-6H5.500z" /></ToolButton>
              <ToolButton aria-label="Next page"><RoundIcon d="M12 19l6.500-7H15V6H9v6H5.500z" /></ToolButton>
              <PageInput aria-label="Page number" defaultValue="2" />
              <PageTotal>/&nbsp; 6</PageTotal>
              <Separator $before={8} $after={5} />
              <ToolButton aria-label="Zoom out"><RoundIcon d="M5.500 9.500h13v5h-13z" /></ToolButton>
              <ToolButton aria-label="Zoom in"><RoundIcon d="M9.500 4.500h5v5h5v5h-5v5h-5v-5h-5v-5h5z" /></ToolButton>
              <ZoomBox>
                <ZoomSelect aria-label="Zoom level" defaultValue="75%"><option>75%</option></ZoomSelect>
                <ZoomArrow><svg width="8" height="5"><path d="M0 0h8L4 5z" fill="#444" /></svg></ZoomArrow>
              </ZoomBox>
              <Separator $before={10} $after={6} />
              <ToolButton aria-label="Fit width"><FitWidthIcon /></ToolButton>
              <ToolButton aria-label="Fit page"><FitPageIcon /></ToolButton>
              <Separator $before={7} $after={6} />
              <ToolButton aria-label="Add note"><CommentIcon /></ToolButton>
              <ToolButton aria-label="Highlight text"><HighlightIcon /></ToolButton>
              <Separator $before={7} $after={6} />
              <ToolButton aria-label="Read mode"><ExpandIcon /></ToolButton>
              <PaneTabs>
                <PaneTab $active>Tools</PaneTab>
                <PaneTab>Fill &amp; Sign</PaneTab>
                <PaneTab>Comment</PaneTab>
              </PaneTabs>
            </Toolbar>

            <Body>
              <Rail>
                <RailButton aria-label="Page thumbnails"><PagesIcon /></RailButton>
                <RailButton aria-label="Attachments"><ClipIcon /></RailButton>
              </Rail>
              <DocumentPane>
                <Page>
                  <StoryTitle>Story 1</StoryTitle>
                  <Points>
                    {storyPoints.map(([a, b], i) => (
                      <Point key={a + b} $active={i === 1}><span>{a}</span><span>{b}</span></Point>
                    ))}
                  </Points>
                  <StoryChart />
                </Page>
              </DocumentPane>
              <ScrollBar>
                <Chevron up />
                <ScrollTrack><ScrollThumb /></ScrollTrack>
                <Chevron />
              </ScrollBar>
              <Panel>
                <SignIn><BlueLink href="#signin">Sign In</BlueLink></SignIn>
                <ExportHead><Triangle open />Export PDF</ExportHead>
                <ExportBody>
                  <ExportTitle>Adobe ExportPDF<GlobeIcon /></ExportTitle>
                  <p>Convert PDF files to Word or Excel online.</p>
                  <SelectFile href="#select">Select PDF File:</SelectFile>
                  <FileBox><PdfIcon /><FileName>Story 1.pdf</FileName></FileBox>
                  <FileInfo>1 file / 96 KB</FileInfo>
                  <FormatLabel htmlFor="format">Convert To:</FormatLabel>
                  <FormatBox>
                    <FormatSelect id="format" defaultValue="docx">
                      <option value="docx">Microsoft Word (*.docx)</option>
                    </FormatSelect>
                    <FormatArrow><svg width="8" height="4"><path d="M0 0h8L4 4z" fill="#666" /></svg></FormatArrow>
                  </FormatBox>
                  <Recognize>Recognize Text in English(U.S.)</Recognize>
                  <NavyLink href="#change">Change</NavyLink>
                  <ConvertButton>Convert</ConvertButton>
                </ExportBody>
                {['Create PDF', 'Edit PDF', 'Send Files', 'Store Files'].map(s => (
                  <SectionHead key={s}><Triangle />{s}</SectionHead>
                ))}
              </Panel>
            </Body>
          </Window>
        </Workspace>

        <TaskBar>
          <StartButton aria-label="Start"><WindowsIcon /></StartButton>
          <SearchBox>
            <CortanaIcon />
            <SearchInput aria-label="Search" placeholder="Type here to search" />
            <MicIcon />
          </SearchBox>
          <TaskButton aria-label="Task view"><TaskViewIcon /></TaskButton>
          <Apps>
            <TaskButton aria-label="VLC"><VlcIcon /></TaskButton>
            <TaskButton aria-label="File Explorer" $state="open"><FilesIcon /></TaskButton>
            <TaskButton aria-label="Chrome" $state="open"><ChromeIcon /></TaskButton>
            <TaskButton aria-label="Store"><StoreIcon /></TaskButton>
            <TaskButton aria-label="Edge"><EdgeIcon /></TaskButton>
            <TaskButton aria-label="Mail"><MailAppIcon /></TaskButton>
            <TaskButton aria-label="Adobe Reader" $state="active"><AcrobatIcon /></TaskButton>
          </Apps>
          <Tray>
            <PeopleButton aria-label="People">
              <TrayGlyph>
                <circle cx="5" cy="7.500" r="2.300" /><path d="M1 15c0-6.500 8-6.500 8 0" />
                <circle cx="11" cy="3" r="2.300" /><path d="M8.500 7c2-2.500 6-1.500 6 3" />
              </TrayGlyph>
            </PeopleButton>
            <TrayButton aria-label="Hidden icons"><TrayGlyph size={14}><path d="M2 11l6-6 6 6" /></TrayGlyph></TrayButton>
            <TrayButton aria-label="Volume">
              <TrayGlyph><path d="M.8 5.500h2.700l3.500-3.500v12l-3.500-3.500H.8zM9 6q1.500 2 0 4M11 4q3 4 0 8" /><path d="M13 2q4.500 6 0 12" stroke="#888" /></TrayGlyph>
            </TrayButton>
            <TrayButton aria-label="Battery">
              <TrayGlyph>
                <path d="M1 4h11v7H1z" /><path d="M3 6h7v3.500H3zM12.500 6h1.500v3h-1.500z" fill="#fff" />
                <circle cx="11" cy="11" r="4.500" fill="#1e9e3a" stroke="none" /><path d="M11 8.500v5M9.500 10.500l1.500-2 1.500 2" />
              </TrayGlyph>
            </TrayButton>
            <TrayButton aria-label="Network">
              <TrayGlyph>
                <path d="M1 14C1 7 7 2.500 13.500 2.500M4 14.500C4 9 8.500 5.500 13.500 5.500M7 14.500c0-4 3-6 6.500-6M10 14.500c0-2 1.500-3.300 3.500-3.300" /><circle cx="12.500" cy="13.500" r="1.200" fill="#fff" stroke="none" />
              </TrayGlyph>
            </TrayButton>
            <TrayButton aria-label="Ink workspace">
              <TrayGlyph><path d="M7 11L12 1.500l2 1L9 12l-2 1.500zM6 8c-3-1-6 1.500-5 4s5 2 7-1 3-5 6-4c2 1 0 3-2 2" /></TrayGlyph>
            </TrayButton>
            <Language>ENG</Language>
            <Clock>09:21<br />12-10-2023</Clock>
            <NoticeButton aria-label="Notifications">
              <TrayGlyph><path d="M.8 1h14.400v11H10.500L8 14.500 5.500 12H.8z" /></TrayGlyph>
            </NoticeButton>
            <DesktopEdge />
          </Tray>
        </TaskBar>
      </Desktop>
    </>
  );
}
